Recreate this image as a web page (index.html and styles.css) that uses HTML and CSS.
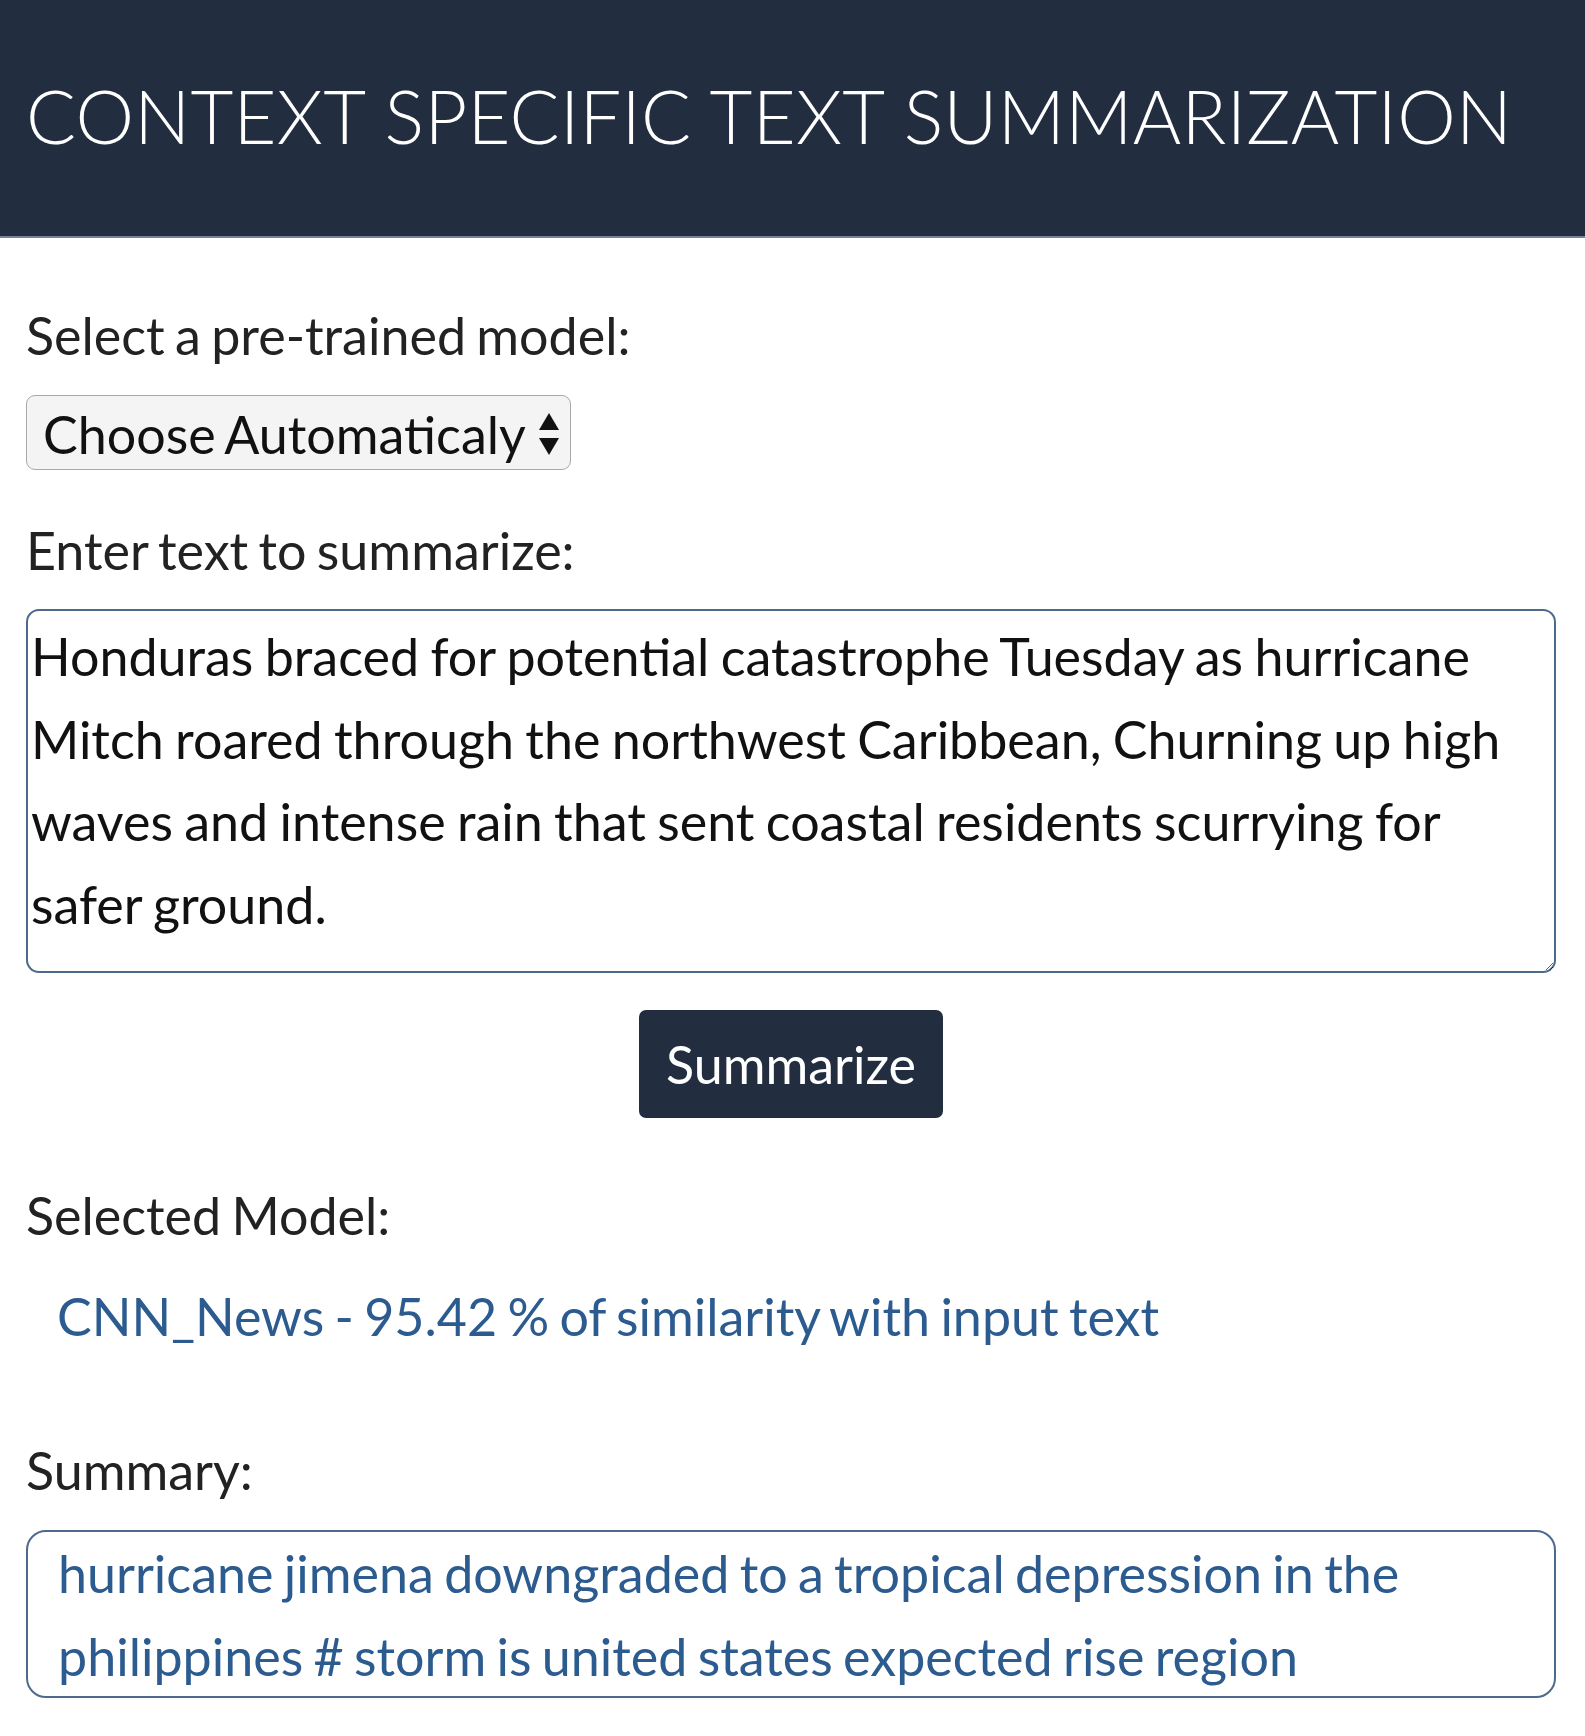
FILE: index.html
```html
<!DOCTYPE html>
<html lang="en">
<head>
<meta charset="utf-8">
<title>Context Specific Text Summarization</title>
<link rel="stylesheet" href="styles.css">
</head>
<body>
<header class="topbar">
  <h1 class="title">CONTEXT SPECIFIC TEXT SUMMARIZATION</h1>
</header>
<main class="content">
  <div class="label label-first">Select a pre-trained model:</div>
  <div class="select">
    <span class="select-text">Choose Automaticaly</span>
    <svg class="select-arrows" width="22" height="46" viewBox="0 0 22 46" aria-hidden="true">
      <path d="M11 2 L21 19 L1 19 Z" fill="#111"/>
      <path d="M1 27 L21 27 L11 44 Z" fill="#111"/>
    </svg>
  </div>
  <div class="label label-text">Enter text to summarize:</div>
  <textarea class="input-text">Honduras braced for potential catastrophe Tuesday as hurricane Mitch roared through the northwest Caribbean, Churning up high waves and intense rain that sent coastal residents scurrying for safer ground.</textarea>
  <div class="actions">
    <button class="btn" type="button">Summarize</button>
  </div>
  <div class="label label-model">Selected Model:</div>
  <div class="model-result">CNN_News - 95.42 % of similarity with input text</div>
  <div class="label label-summary">Summary:</div>
  <div class="summary-box">hurricane jimena downgraded to a tropical depression in the philippines # storm is united states expected rise region</div>
</main>
</body>
</html>
```
FILE: styles.css
```css
html, body {
  margin: 0;
  padding: 0;
  background: #ffffff;
}
body {
  font-family: "Lato", "Liberation Sans", sans-serif;
  color: #222222;
  word-spacing: -3px;
}
.topbar {
  background: #222e3f;
  height: 236px;
  box-sizing: content-box;
  border-bottom: 2px solid #7a8491;
  display: flex;
  align-items: center;
  padding-left: 26px;
  padding-bottom: 0;
}
.title {
  margin: 0 0 5px 0;
  color: #ffffff;
  font-family: "Lato", "Open Sans", sans-serif;
  font-weight: 300;
  font-size: 74px;
  letter-spacing: 0.3px;
  word-spacing: 0;
  line-height: 1;
  white-space: nowrap;
}
.content {
  padding: 0 29px 40px 26px;
  display: flex;
  flex-direction: column;
}
.label {
  font-size: 52px;
  line-height: 62px;
  color: #222222;
}
.label-first { margin-top: 66px; }
.select {
  margin-top: 29px;
  width: 545px;
  height: 75px;
  box-sizing: border-box;
  border: 1px solid #a8a8a8;
  border-radius: 9px;
  background: #f4f4f4;
  display: flex;
  align-items: center;
  justify-content: space-between;
  padding: 2px 10px 0 16px;
  font-size: 52px;
  line-height: 62px;
  color: #111111;
}
.select-arrows { display: block; }
.label-text { margin-top: 49px; }
.input-text {
  margin-top: 28px;
  width: 100%;
  height: 364px;
  box-sizing: border-box;
  border: 2px solid #4d6a8e;
  border-radius: 13px;
  padding: 4px 3px;
  font-family: "Lato", "Liberation Sans", sans-serif;
  font-size: 52px;
  line-height: 82.5px;
  word-spacing: -2px;
  color: #111111;
  background: #ffffff;
  resize: vertical;
  outline: none;
}
.actions {
  margin-top: 37px;
  display: flex;
  justify-content: center;
}
.btn {
  width: 304px;
  height: 108px;
  border: none;
  border-radius: 7px;
  background: #222e3f;
  color: #ffffff;
  font-family: "Lato", "Liberation Sans", sans-serif;
  font-size: 52px;
  font-weight: 400;
  padding: 0;
}
.label-model { margin-top: 66px; }
.model-result {
  margin-top: 39px;
  margin-left: 31px;
  font-size: 52px;
  line-height: 62px;
  color: #2c5b8f;
}
.label-summary { margin-top: 92px; }
.summary-box {
  margin-top: 29px;
  height: 168px;
  box-sizing: border-box;
  border: 2px solid #4d6a8e;
  border-radius: 20px;
  padding: 0 30px;
  font-size: 52px;
  line-height: 83px;
  color: #2c5b8f;
}
```
